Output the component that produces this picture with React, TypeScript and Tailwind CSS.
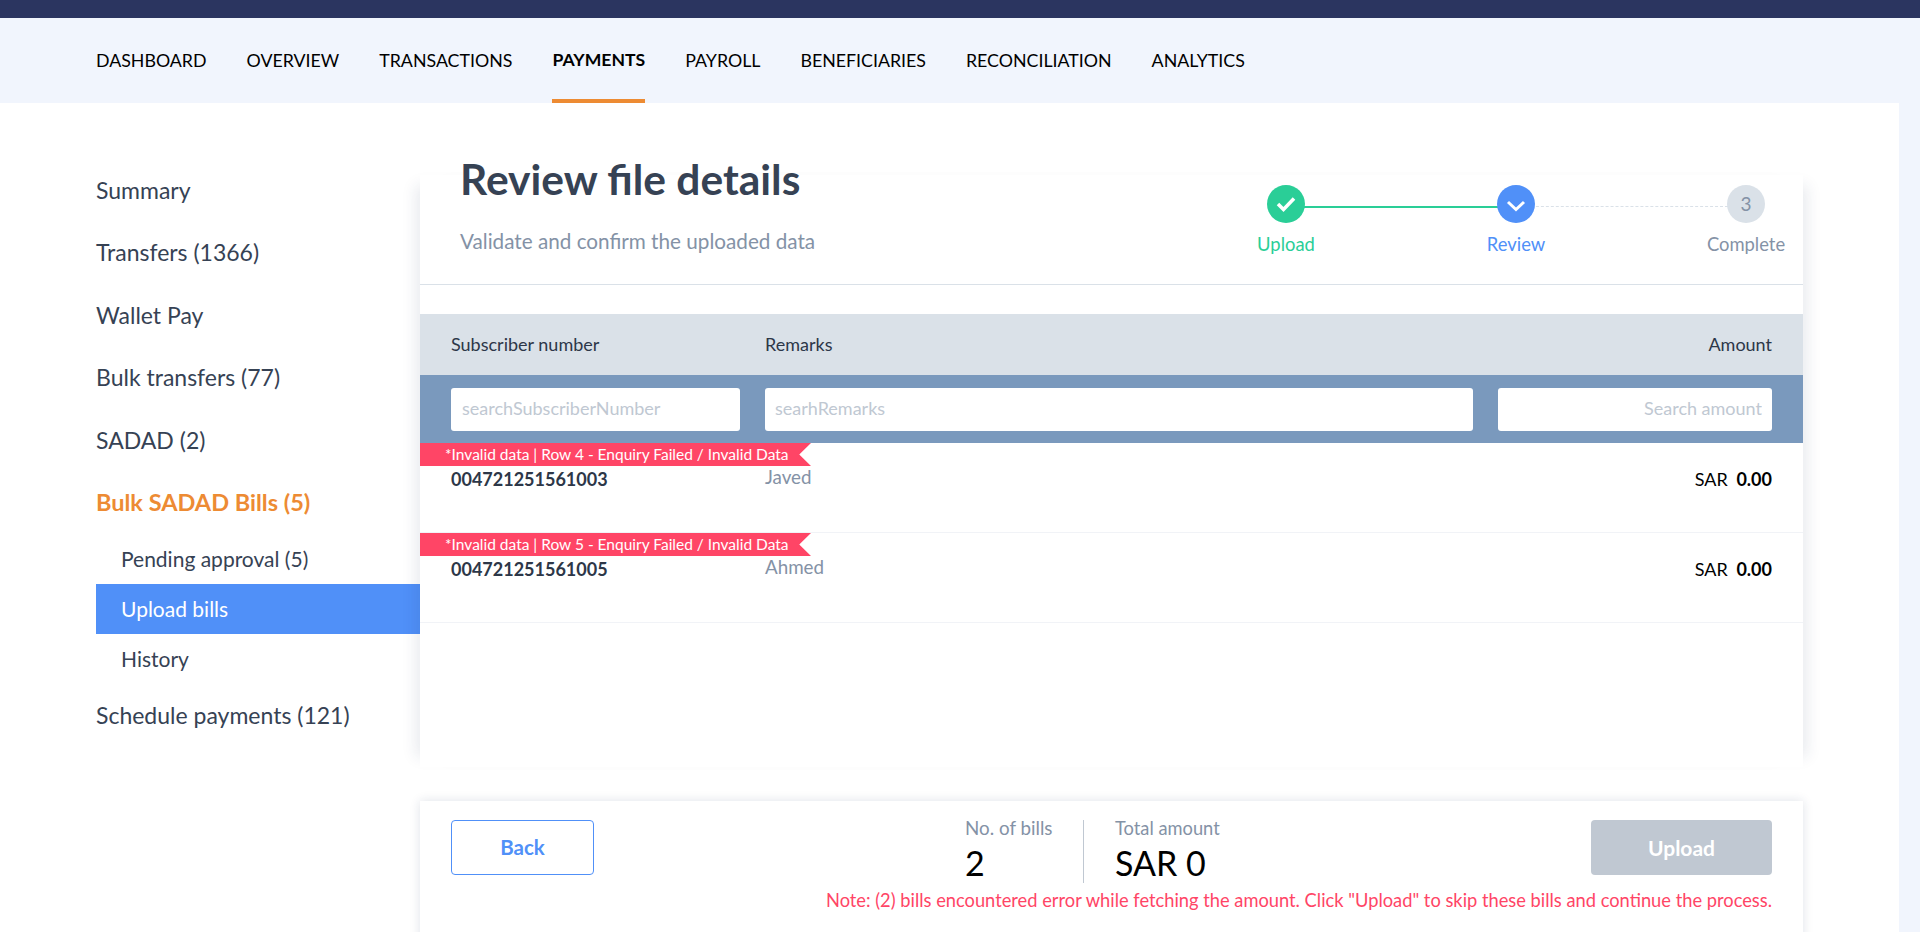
import React from "react";

const navItems = [
  "DASHBOARD",
  "OVERVIEW",
  "TRANSACTIONS",
  "PAYMENTS",
  "PAYROLL",
  "BENEFICIARIES",
  "RECONCILIATION",
  "ANALYTICS",
];

const rows = [
  { row: 4, number: "004721251561003", remark: "Javed" },
  { row: 5, number: "004721251561005", remark: "Ahmed" },
];

const SideLink: React.FC<{ label: string; active?: boolean }> = ({ label, active }) => (
  <div
    className={
      active
        ? "h-[62.4px] flex items-center text-[23.5px] font-bold text-[#ed8b33]"
        : "h-[62.4px] flex items-center text-[23px] text-[#364254]"
    }
  >
    {label}
  </div>
);

const Step: React.FC<{ label: string; labelClass: string; circleClass: string; children: React.ReactNode }> = ({
  label,
  labelClass,
  circleClass,
  children,
}) => (
  <div className="w-[80px] flex flex-col items-center">
    <div className={`w-[38px] h-[38px] rounded-full flex items-center justify-center ${circleClass}`}>{children}</div>
    <div className={`mt-[9px] text-[18.4px] leading-[24px] ${labelClass}`}>{label}</div>
  </div>
);

export default function App() {
  return (
    <div className="h-[932px] overflow-hidden bg-white font-['Lato','Liberation_Sans',sans-serif]">
      <div className="h-[18px] bg-[#2b3560]" />
      <nav className="h-[85px] bg-[#f1f5fd] pl-[96px] flex gap-[40px]">
        {navItems.map((item) => (
          <div
            key={item}
            className={
              item === "PAYMENTS"
                ? "pt-[30px] text-[17.6px] leading-[24px] font-bold text-black border-b-4 border-[#ed8b33]"
                : "pt-[30px] text-[17.8px] leading-[24px] text-black"
            }
          >
            {item}
          </div>
        ))}
      </nav>

      <div className="flex h-[829px]">
        <aside className="w-[324px] ml-[96px] pt-[56px] shrink-0">
          <SideLink label="Summary" />
          <SideLink label="Transfers (1366)" />
          <SideLink label="Wallet Pay" />
          <SideLink label="Bulk transfers (77)" />
          <SideLink label="SADAD (2)" />
          <SideLink label="Bulk SADAD Bills (5)" active />
          <div className="pt-[2px] text-[21px] text-[#364254]">
            <div className="h-[49px] pl-[25px] pb-[2px] flex items-center">Pending approval (5)</div>
            <div className="h-[50px] pl-[25px] pb-[2px] flex items-center bg-[#5090f8] text-white">Upload bills</div>
            <div className="h-[50px] pl-[25px] pb-[2px] flex items-center">History</div>
          </div>
          <SideLink label="Schedule payments (121)" />
        </aside>

        <main className="w-[1383px] shrink-0">
          <section className="mt-[72px] h-[592px] flex flex-col bg-white shadow-[-14px_0_14px_-10px_rgba(30,50,90,0.1),14px_0_14px_-10px_rgba(30,50,90,0.1)]">
            <header className="h-[182px] shrink-0 -mt-[72px] border-b border-[#dae1e8] flex justify-between">
              <div className="pl-[40px] pt-[50px]">
                <h1 className="text-[42.5px] leading-[52px] font-bold text-[#364254]">Review file details</h1>
                <p className="mt-[23px] text-[20.7px] leading-[26px] text-[#8492a6]">Validate and confirm the uploaded data</p>
              </div>
              <div className="mt-[82px] mr-[17px] w-[540px] h-[80px] relative flex justify-between">
                <div className="absolute left-[58px] right-[270px] top-[21px] h-[2px] bg-[#2ace97]" />
                <div className="absolute left-[270px] right-[58px] top-[21px] border-t border-dashed border-[#dae1e8]" />
                <Step label="Upload" labelClass="text-[#2ace97]" circleClass="relative bg-[#2ace97]">
                  <svg width="24" height="24" viewBox="0 0 24 24" fill="none">
                    <path d="M4 12l5.5 5.5L20 6.5" stroke="#fff" strokeWidth="3.5" />
                  </svg>
                </Step>
                <Step label="Review" labelClass="text-[#5090f8]" circleClass="relative bg-[#5090f8]">
                  <svg width="24" height="24" viewBox="0 0 24 24" fill="none">
                    <path d="M4 10l8 7.5 8-7.5" stroke="#fff" strokeWidth="3" />
                  </svg>
                </Step>
                <Step label="Complete" labelClass="text-[#8492a6]" circleClass="relative bg-[#dae1e8] text-[#8492a6] text-[19px]">
                  3
                </Step>
              </div>
            </header>

            <div className="mt-[29px] h-[61px] shrink-0 bg-[#dae1e8] px-[31px] grid grid-cols-[289px_708px_274px] gap-x-[25px] items-center text-[18px] text-[#2d3748]">
              <div>Subscriber number</div>
              <div>Remarks</div>
              <div className="text-right">Amount</div>
            </div>
            <div className="h-[68px] shrink-0 bg-[#7a99bd] px-[31px] grid grid-cols-[289px_708px_274px] gap-x-[25px] items-center">
              <input readOnly placeholder="searchSubscriberNumber" className="h-[43px] rounded-[3px] bg-white px-[11px] pb-[2px] text-[18px] placeholder:text-[#c0c8d2]" />
              <input readOnly placeholder="searhRemarks" className="h-[43px] rounded-[3px] bg-white px-[10px] pb-[2px] text-[18px] placeholder:text-[#c0c8d2]" />
              <input readOnly placeholder="Search amount" className="h-[43px] rounded-[3px] bg-white px-[10px] pb-[2px] text-right text-[18px] placeholder:text-[#c0c8d2]" />
            </div>

            {rows.map((r) => (
              <div key={r.row} className="h-[90px] shrink-0 border-b border-[#f1f3f7]">
                <div className="w-[391px] h-[23px] bg-[#ff4566] pl-[25px] text-[15.5px] leading-[23px] text-white [clip-path:polygon(0_0,100%_0,97%_50%,100%_100%,0_100%)]">
                  *Invalid data | Row {r.row} - Enquiry Failed / Invalid Data
                </div>
                <div className="px-[31px] grid grid-cols-[289px_708px_274px] gap-x-[25px]">
                  <div className="mt-[1px] text-[18px] leading-[24px] font-bold text-[#2d3748]">{r.number}</div>
                  <div className="text-[18.8px] leading-[22px] text-[#8492a6]">{r.remark}</div>
                  <div className="mt-[1px] text-right text-[18px] leading-[24px] text-black">
                    SAR <span className="ml-[4px] font-bold">0.00</span>
                  </div>
                </div>
              </div>
            ))}
          </section>

          <section className="mt-[34px] h-[160px] bg-white px-[31px] pt-[19px] shadow-[0_0_10px_rgba(30,50,90,0.14)]">
            <div className="flex items-start">
              <button className="w-[143px] h-[55px] rounded-[4px] border border-[#5090f8] text-[20.5px] font-bold text-[#5090f8]">Back</button>
              <div className="ml-[371px] flex h-[63px]">
                <div className="w-[119px] border-r border-[#c0c8d2]">
                  <div className="text-[18.8px] leading-[16px] text-[#8492a6]">No. of bills</div>
                  <div className="mt-[7px] text-[34px] leading-[40px] text-black">2</div>
                </div>
                <div className="pl-[31px]">
                  <div className="text-[18.3px] leading-[16px] text-[#8492a6]">Total amount</div>
                  <div className="mt-[7px] text-[34px] leading-[40px] text-black">SAR 0</div>
                </div>
              </div>
              <button className="ml-auto w-[181px] h-[55px] rounded-[4px] bg-[#c0c8d2] text-[21px] font-bold text-white">Upload</button>
            </div>
            <p className="mt-[5px] text-right text-[18.3px] leading-[24px] text-[#ff4566]">
              Note: (2) bills encountered error while fetching the amount. Click "Upload" to skip these bills and continue the process.
            </p>
          </section>
        </main>

        <div className="flex-1" />
        <div className="w-[21px] bg-[#f1f5fd]" />
      </div>
    </div>
  );
}
